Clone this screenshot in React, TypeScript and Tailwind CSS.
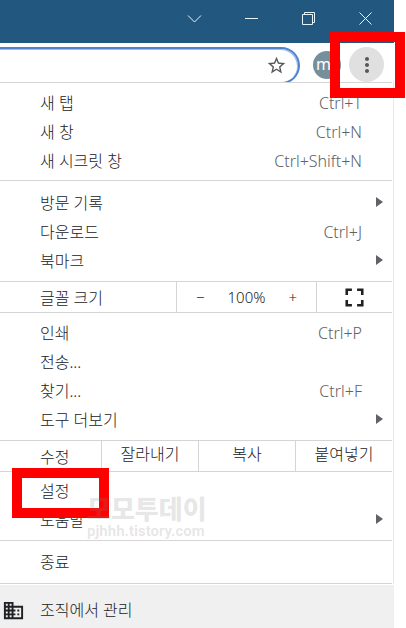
import React from "react";
import {
  MdDomain,
  MdFullscreen,
  MdMoreVert,
  MdStarBorder,
} from "react-icons/md";

function Item({
  label,
  shortcut,
  submenu,
}: {
  label: string;
  shortcut?: string;
  submenu?: boolean;
}) {
  return (
    <li>
      <button
        type="button"
        className="flex h-[29px] w-full items-center pb-px pl-10 text-left"
      >
        <span className="flex-1">{label}</span>
        {shortcut && (
          <span className="pr-[30px] text-[#606265]">{shortcut}</span>
        )}
        {submenu && (
          <svg
            viewBox="0 0 7 10"
            className="mr-[9px] mb-[2px] h-[10px] w-[7px]"
            fill="#5f6368"
          >
            <path d="M0 0 L7 5 L0 10 Z" />
          </svg>
        )}
      </button>
    </li>
  );
}

function TitleBar() {
  const button = "flex h-full w-[57px] items-center justify-center";
  return (
    <div className="flex h-[43px] justify-end bg-[#22577f] pb-[6px] text-[#e6f4fa]">
      <button type="button" aria-label="탭 검색" className={button}>
        <svg width="15" height="15" viewBox="0 0 15 15" fill="none" stroke="currentColor">
          <path d="M1 4.5 L7.5 11 L14 4.5" />
        </svg>
      </button>
      <button type="button" aria-label="최소화" className={button}>
        <svg width="15" height="15" viewBox="0 0 15 15" fill="none" stroke="currentColor">
          <path d="M1 7.5 H14" />
        </svg>
      </button>
      <button type="button" aria-label="이전 크기로" className={button}>
        <svg width="15" height="15" viewBox="0 0 15 15" fill="none" stroke="currentColor">
          <path d="M1.5 3.5 H11.5 V13.5 H1.5 Z M3.5 3.5 V1.5 H13.5 V11.5 H11.5" />
        </svg>
      </button>
      <button type="button" aria-label="닫기" className={button}>
        <svg width="15" height="15" viewBox="0 0 15 15" fill="none" stroke="currentColor">
          <path d="M1.5 1.5 L13.5 13.5 M13.5 1.5 L1.5 13.5" />
        </svg>
      </button>
    </div>
  );
}

function Toolbar() {
  return (
    <div className="flex h-[39px] items-start pt-1 pr-[10px]">
      <div className="h-[35px] flex-1 overflow-hidden">
        <div className="flex h-[37px] items-center justify-end rounded-r-full border-y-2 border-r-2 border-[#4f82cc] pr-[11px] shadow-[inset_-1px_1px_0_#9dbdee]">
          <button type="button" aria-label="북마크에 추가">
            <MdStarBorder className="size-[21px] text-[#55585c]" />
          </button>
        </div>
      </div>
      <button
        type="button"
        aria-label="프로필"
        className="mt-1 ml-[13px] flex size-[28px] items-center rounded-full bg-[#76909b] pb-[2px] pl-[3px] text-[16px] font-normal text-white"
      >
        m
      </button>
      <div className="relative ml-[8px] size-[35px]">
        <button
          type="button"
          aria-label="메뉴"
          className="flex size-[35px] items-center justify-center rounded-full bg-[#e0e0e0]"
        >
          <MdMoreVert className="size-6 text-[#55585c]" />
        </button>
        <div className="pointer-events-none absolute -top-[15px] -right-[21px] -bottom-4 -left-[19px] z-10 border-10 border-[#ff0000]" />
      </div>
    </div>
  );
}

export default function App() {
  return (
    <div className="min-h-screen overflow-hidden bg-white pr-3 font-['Noto_Sans','Noto_Sans_CJK_KR',sans-serif] text-[16px] font-light text-[#202124]">
      <TitleBar />
      <Toolbar />

      <div className="border-r border-[#e8e8e8]">
        <div className="mr-px divide-y divide-[#d5d5d5] border-y border-[#d5d5d5]">
          <ul className="pt-[6px] pb-1">
            <Item label="새 탭" shortcut="Ctrl+T" />
            <Item label="새 창" shortcut="Ctrl+N" />
            <Item label="새 시크릿 창" shortcut="Ctrl+Shift+N" />
          </ul>

          <ul className="pt-2 pb-[5px]">
            <Item label="방문 기록" submenu />
            <Item label="다운로드" shortcut="Ctrl+J" />
            <Item label="북마크" submenu />
          </ul>

          <div className="flex h-[31px] divide-x divide-[#d5d5d5]">
            <span className="flex w-[177px] items-center pt-px pl-10">
              글꼴 크기
            </span>
            <div className="flex flex-1 items-center text-[15px]">
              <button type="button" aria-label="축소" className="flex-1">
                −
              </button>
              <span className="flex-1 text-center">100%</span>
              <button type="button" aria-label="확대" className="flex-1">
                +
              </button>
            </div>
            <button
              type="button"
              aria-label="전체화면"
              className="flex w-[75px] items-center justify-center"
            >
              <MdFullscreen className="size-[31px]" />
            </button>
          </div>

          <ul className="pt-[6px] pb-[5px]">
            <Item label="인쇄" shortcut="Ctrl+P" />
            <Item label="전송..." />
            <Item label="찾기..." shortcut="Ctrl+F" />
            <Item label="도구 더보기" submenu />
          </ul>

          <div className="flex h-[31px] divide-x divide-[#d5d5d5]">
            <span className="flex w-[102px] items-center pt-px pl-10">
              수정
            </span>
            <button type="button" className="flex-1 pb-1">
              잘라내기
            </button>
            <button type="button" className="flex-1 pb-1">
              복사
            </button>
            <button type="button" className="flex-1 pb-1">
              붙여넣기
            </button>
          </div>

          <div className="relative">
            <ul className="pt-[5px] pb-[5px]">
              <Item label="설정" />
              <Item label="도움말" submenu />
            </ul>
            <div className="pointer-events-none absolute -top-1 left-3 h-[50px] w-[97px] border-10 border-[#ff0000]" />
            <div className="pointer-events-none absolute top-[22px] left-[87px] text-[#808080]/20">
              <p className="font-['Noto_Sans_CJK_KR',sans-serif] text-[26px] leading-[28px] font-black">
                모모투데이
              </p>
              <p className="font-[Roboto,sans-serif] text-[15px] leading-[18px] font-bold">
                pjhhh.tistory.com
              </p>
            </div>
          </div>

          <ul className="pt-[7px] pb-[6px]">
            <Item label="종료" />
          </ul>
        </div>
      </div>

      <button
        type="button"
        className="mt-px flex h-[50px] w-full items-center bg-[#f0f0f0] pl-[2px] text-left"
      >
        <MdDomain className="mr-[15px] size-[23px]" />
        조직에서 관리
      </button>
    </div>
  );
}
